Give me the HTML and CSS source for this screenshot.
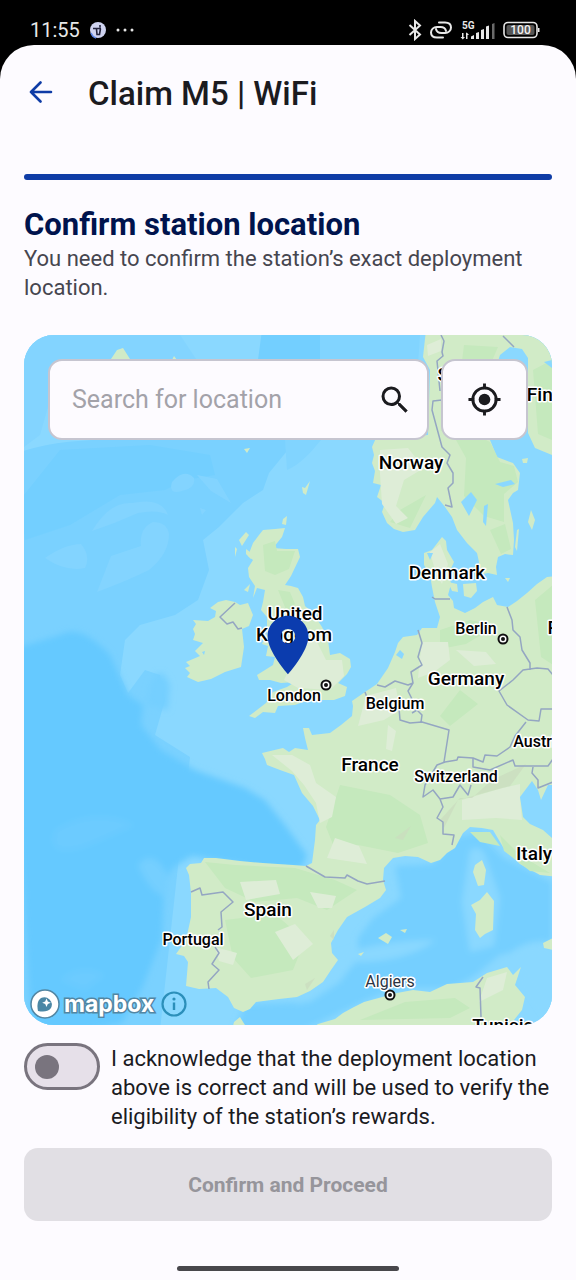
FILE: index.html
```
<!DOCTYPE html>
<html lang="en">
<head>
  <meta charset="UTF-8">
  <meta name="viewport" content="width=device-width, initial-scale=1.0">
  <title>Claim M5 | WiFi</title>
  <link rel="stylesheet" href="styles.css">
</head>
<body>
  <div class="status-bar">
    <div class="status-left">
      <span class="clock">11:55</span>
      <svg class="app-badge" viewBox="0 0 18 18" width="18" height="18">
        <circle cx="9" cy="9" r="8" fill="#cfd3f0"/>
        <path d="M4 7.500h8M11 4v2.500M7.500 8l.5 5.500h2.500l1-6" fill="none" stroke="#23233c" stroke-width="1.600"/>
        <path d="M2 12a8 8 0 0 0 5 5" fill="none" stroke="#5d86e8" stroke-width="1.500"/>
      </svg>
      <svg viewBox="0 0 18 4" width="18" height="4" fill="#e6e6e6">
        <circle cx="2" cy="2" r="1.500"/><circle cx="9" cy="2" r="1.500"/><circle cx="16" cy="2" r="1.500"/>
      </svg>
    </div>
    <div class="status-right">
      <svg viewBox="0 0 14 22" width="14" height="22" fill="none" stroke="#e8e8e8" stroke-width="2">
        <path d="M1.500 6l10.500 9.500-5 4.500V2l5 4.500L1.500 16"/>
      </svg>
      <svg viewBox="0 0 24 18" width="24" height="18" fill="none" stroke="#e8e8e8" stroke-width="2" stroke-linecap="round">
        <path d="M14 16.500H8c-4 0-6-2-6-5s2.500-5.500 6-5.500h3.500c3 0 5 1.500 5.500 4"/>
        <path d="M10 1.500h6c4 0 6 2 6 5s-2.500 5.500-6 5.500h-3.500c-3 0-5-1.500-5.500-4"/>
      </svg>
      <svg class="signal" viewBox="0 0 36 20" width="36" height="20" fill="#e8e8e8">
        <text x="2" y="9">5G</text>
        <path d="M2 13h1.500v4H5l-2.200 2.500L.5 17H2zM6 19h1.500v-4H9l-2.200-2.500L6 13z"/>
        <path d="M11 16.500l3-1.500v4h-3zM16 13l3-1v7h-3zM21 10l3-1v10h-3zM26 6.500l3-1V19h-3z"/>
        <path fill="#6a6a6a" d="M32 4l2.500-1v16H32z"/>
      </svg>
      <svg class="battery" viewBox="0 0 38 18" width="38" height="18">
        <rect x="1" y="1.500" width="33" height="15" rx="4" fill="none" stroke="#e8e8e8" stroke-width="1.600"/>
        <rect x="3.500" y="4" width="28" height="10" rx="2" fill="#555"/>
        <path d="M35 7h1.500v4H35z" fill="#e8e8e8"/>
        <text x="17.500" y="13.200">100</text>
      </svg>
    </div>
  </div>

  <main class="screen">
    <header class="app-bar">
      <button class="back-btn" type="button" aria-label="Back">
        <svg viewBox="0 0 24 24" width="24" height="24" fill="none" stroke="#0f3ca6" stroke-width="2.600" stroke-linecap="round" stroke-linejoin="round">
          <path d="M22 11H2M11.500 1.500L2 11l9.500 9.500"/>
        </svg>
      </button>
      <h1>Claim M5 | WiFi</h1>
    </header>

    <div class="progress"></div>

    <section class="intro">
      <h2>Confirm station location</h2>
      <p>You need to confirm the station’s exact deployment location.</p>
    </section>

    <section class="map">
      <svg class="map-canvas" viewBox="24 335 528 690" preserveAspectRatio="xMidYMid slice">
        <defs>
          <filter id="soft" x="-10%" y="-10%" width="120%" height="120%"><feGaussianBlur stdDeviation="3"/></filter>
        </defs>
        <!-- sea -->
        <rect x="0" y="300" width="600" height="760" fill="#8ad8ff"/>
        <path fill="#7ad1ff" d="M20 452C60 440 90 438 180 440L296 440 269 473 263 490 243 503 219 527 203 540 209 570 198 600 175 615 140 625 125 640 120 675 128 693 145 670 160 675 165 700 155 735 190 757 160 1030H20z"/>
        <path fill="#73cfff" d="M262 330h58v30h-62zM60 450l90-5 60 10 5 20-30 5-20 10-45 5-50 30-45 15-5-40z"/>
        <path fill="#81d4ff" d="M285 440h36c-10 12-20 24-34 30zM320 335h100l-2 30h-98z"/>
        <g fill="#83d4ff">
          <path d="M20 335h160l20 30H60l-20 70-20 15z"/>
          <path d="M172 482q12-14 22-4 2 10-12 13-14 4-10-9zM92 531q18-30 40-28 30-6 36 12-10-6-30-2-22 10-46 18z"/>
          <path d="M197 475l20 4 14 24-20-12zM200 508l6 2-4 5zM97 592l14-36 30-10q-2-18 12-24 14 0 16 12 0 20-20 36-20 10-52 22zM45 558q20-14 36-14 10 12 4 24-20 4-40-10z"/>
        </g>
        <g filter="url(#soft)">
          <path fill="#65c9ff" d="M10 650l50-15q20-12 50 20l18 40 15 10-2 20 20 25 34 20 50 18 20 12 20 25 22 30-5 13-30 2-80-14-20 12-8 20-2 50-20 50-20 35-90 20z"/>
          <path fill="#74cfff" d="M150 685q10-24 20 0l-2 25-22-5zM138 865q14-18 30 10l-2 22q-16-4-28-32z"/>
          <path fill="#6ccbff" d="M55 830q40-24 80-5l-50 22q-40 12-30-17zM60 980q20-18 45-5l-20 15z"/>
          <path fill="#75cfff" d="M395 866l38-2 26-28 20-3 25 25 48 24v60q-30-5-55 22l-45 24-55 0-30 12-32 15-30 14h-70l10-25 65-2 30-20 18-24 0-20 15-20 28-20z"/>
          <path fill="#8ad8ff" d="M326 960q50-20 110-20-30 22-80 22l-60 45zM560 945l-60 10-30 25 50-5 40 60zM470 850q12-6 16 8l14 40-6 48-24 6-8-50z"/>
        </g>
        <!-- land -->
        <g class="land">
          <path d="M426 330L423 357 430 370 428 435 376 438 372 447 374 455 372 463 375 471 373 483 381 485 377 497 385 503 382 512 387 523 394 529 403 532 415 530 423 517 435 503 437 497 445 507 452 517 457 530 467 543 477 553 479 562 478 575 488 573 497 575 496 567 498 557 505 554 513 555 514 540 513 523 508 500 513 493 518 490 520 473 513 463 497 457 490 440 485 400 500 355 510 347 522 349 528 358 528 433 535 448 552 455 570 460V330z"/>
          <path d="M263 530L275 529 285 528 282 537 273 548 286 549 298 549 300 557 291 576 285 585 291 586 298 588 303 597 305 606 313 613 322 627 328 640 330 655 340 653 350 659 351 667 347 674 338 683 347 687 345 696 334 700 323 700 303 702 295 705 278 706 275 713 263 712 255 718 249 716 266 703 273 692 287 687 295 682 281 683 270 680 259 680 257 675 273 665 275 657 266 656 268 646 262 644 267 633 267 617 261 610 263 602 265 590 257 588 253 598 255 586 249 577 248 568 253 560 248 556 253 543 259 535z"/>
          <path d="M235 602L240 605 248 603 253 615 249 626 242 629 244 647 241 667 225 672 211 679 198 682 187 677 190 673 185 668 190 666 186 662 200 656 195 651 203 643 193 640 195 634 193 629 196 624 193 620 208 621 215 617 216 611 210 608 218 602 226 600z"/>
          <path d="M239 540l7-8 3 3-7 11zM235 547l2 2-2 8zM246 549l8 6-3 4-5-5zM244 590l6-6-2 8zM283 519l4-3-1 9-4-1zM244 449l6-1-3 5zM302 487l3 1 5-7-4 14-3-2zM111 359l6-9 6-2 7 11zM172 360l2-4 3 4z"/>
          <path d="M442 537L446 541 447 550 454 562 449 573 451 584 448 595 453 601 454 608 465 613 475 608 483 602 493 597 497 605 508 607 517 601 527 593 537 584 547 577 560 576V785H548L541 800 538 790 532 781 520 797 523 817 530 824 543 830 560 845V877L540 875 520 864 503 847 493 830 482 828 470 827 463 833 455 848 447 853 440 860 431 863 418 857 405 856 393 858 384 868 383 880 386 890 380 898 365 907 347 917 338 930 331 943 332 953 338 960 331 970 323 982 310 991 297 997 279 999 256 1002 250 1009 243 1012 234 1008 228 997 216 988 199 989 186 986 188 962 184 956 176 954 186 940 191 917 191 893 189 875 186 868 190 864 201 863 204 858 216 858 240 861 263 863 293 865 306 866 312 863 315 840 316 825 320 820 313 806 302 793 294 775 280 770 267 765 265 759 262 753 283 748 289 752 295 748 308 750 305 738 303 728 309 728 312 735 330 733 341 725 352 716 353 706 352 701 365 692 377 684 388 668 395 652 398 643 403 637 417 635 422 628 437 628 440 617 435 602 432 587 430 575 424 565 424 553 432 550z"/>
          <path d="M448 582l9 2 1 8-6-1zM463 584l13-1 1 8-6 7-7-2zM517 530l2-1-2 22-2-4zM531 510l4 10-3 10-4-8zM505 578l5 0-2 4zM522 459l6-1-1 5-4 0z"/>
          <path d="M482 860l4 10-2 15-6 1-5-14 2-7zM487 892l7 9-1 29-8 4-5 4-5-8 1-16-5-9 9-5zM378 938l8-5 6 4-4 7zM400 930l7-1-2 4zM358 954l6-2-3 4zM543 943l10-5v12l-9-2z"/>
          <path d="M310 1030L318 1024 335 1019 343 1013 354 1007 364 1002 397 993 413 990 430 992 447 984 473 982 487 973 507 967 513 975 521 967 515 985 525 997 522 1010 514 1020 513 1030zM232 1030L234 1022 240 1017 248 1030z"/>
        </g>
        <!-- relief -->
        <g fill="#c5e9bd">
          <path d="M440 430l30 2 20 10 10 20 14 4 4 16-14 12 0 28-20-6-20-20 2-38-10-18zM464 345l34 2-6 14h-30zM533 370l19-10v80l-14-6zM490 530l15-6 6 25-10 5zM400 510l26-15-16 33-20-6z"/>
          <path d="M263 545l12-4 2 10 18 0-6 18-14 6-10-4zM278 590l12 2 5 12-8 8zM205 862l30 3 60 3 40 12 22 10-30 20-30-12-42 4-30-14z"/>
          <path d="M340 785l50 10 30 20 8 28-30 10-40-8-20 12-12-30zM470 832l20 0 10 14-20-4zM500 835l20 20 30 18-20-2-26-20zM440 630l30-10 26 6-30 18-26 5zM460 690l18 14-28 22-10-10zM535 600l18-15v80l-12-8z"/>
          <path d="M225 920l50-6 30 26-12 30-42 8-18-20zM360 1020l45-18 50-4 15 10-20 10z"/>
        </g>
        <g fill="#deedd7">
          <path d="M380 450l28-2 16 20-20 12-8 26 12 12-12 6-14-20-2-30zM427 345l14-6v12l-13 5zM290 632l26 8 10 20 16 0 2 16-14 14-32-2-14-8 10-20z"/>
          <path d="M422 642l26 0 2 18-16 12-16 6 2-20zM366 696l30-8 4 22-16 10-26 6zM430 552l10-8 8 20-6 20-6-10zM456 650l30 2 10 12-22 2z"/>
          <path d="M272 755l20 0 18 10 6 18 20 14-4 20-12 6-4-20-12-18-12-14zM335 838l24 8 8 18-40-6zM388 725l8 6-4 20-6-2zM462 800l40-12 18-4 0 16 2 20-26-2-34 2zM240 882l36-2 4 14-34 6zM275 932l20-8 18 20-20 16zM310 892l26 4-4 12-14 0zM487 978l20-6-4 18-24 12zM215 947l22 6-4 12-14-4z"/>
        </g>
        <g fill="#cbdcbf" opacity=".7">
          <path d="M440 820l20-22 12 0 20-18 34-16-16 22-52 14-14 28zM305 984l10-6-8 12zM395 838l16-12-8 14zM330 936l4-6 0 10z"/>
        </g>
        <g fill="#8ad8ff">
          <path d="M461 502l10-10 6 8-8 16zM484 506l4-2-2 22-3-4zM495 484l16-4 4 4-12 3zM427 553l6 0-3 7zM400 650l4 4-2 5-6-4zM202 652l3-1-1 4zM544 362l8-2v8z"/>
        </g>
        <!-- borders -->
        <g fill="none" stroke="#94a6c2" stroke-width="1.500" stroke-linejoin="round">
          <path d="M441 335l3 6-2 11 1 4-6 5 3 30M442 400l-9 1-1 9 10 37 8 8-3 8 6 10v10l-5 5 4 19-7-2M503 336l11 11"/>
          <path d="M235 603l-15 14 7 7 6-2 5 7 4-1"/>
          <path d="M432 597l3 2h15M418 630l4 13-4 14 4 8-11 7 2 11-5 8 4 8 4 12M365 692l3 8M377 685l8 2 10-6 13 4 5-2M399 708l1 12 10 3 12-1 27 8-5 32M412 713l5-3 5 5-1 7M507 607l5 13 1 10 7 7 2 13 8 13v7M553 675l-5-6-11-1-14 2-10 10-14 11 8 14 21 15 11 1 2-12h12M526 722l-11 14-5 11-13 9-12-1-2 7-10-4-15-1-1 3-12 2"/>
          <path d="M445 762l-8 3-12 20-2 12 10-7 7 9 13-2 7-12 8 10 3-10M473 758v9l17 3 23-10 2 6 33 0 5-7M533 767l-1 6 6 7v8l15-6M440 799l3 8-6 11 6 4v12l11 1-2 10"/>
          <path d="M306 866l19 11 20 1 2-3 11 6 9 3 18-3M191 892l9-4 2 7 21-3 10 10-12 10 1 15-4 3M215 947l4 6-7 11 7 6-11 12 1 7M483 977l-7 10 4 1 1 29"/>
        </g>
        <g class="city">
          <circle cx="326" cy="685" r="4.500"/><circle cx="503" cy="639" r="4.500"/><circle cx="390" cy="995" r="4.500"/>
        </g>
        <g fill="#111">
          <circle cx="326" cy="685" r="2"/><circle cx="503" cy="639" r="2"/><circle cx="390" cy="995" r="2"/>
        </g>
        <g class="country">
          <text x="411" y="469">Norway</text>
          <text x="447" y="579">Denmark</text>
          <text x="295" y="620">United</text>
          <text x="294" y="641">Kingdom</text>
          <text x="466" y="685">Germany</text>
          <text x="370" y="771">France</text>
          <text x="268" y="916">Spain</text>
          <text x="534" y="860">Italy</text>
          <text x="503" y="1032">Tunisia</text>
          <text x="471" y="381">Sweden</text>
          <text x="558" y="401">Finland</text>
          <text x="577" y="634">Poland</text>
        </g>
        <g class="country small">
          <text x="395" y="709">Belgium</text>
          <text x="456" y="782">Switzerland</text>
          <text x="539" y="747">Austria</text>
          <text x="193" y="945">Portugal</text>
          <text x="294" y="701">London</text>
          <text x="476" y="634">Berlin</text>
        </g>
        <g class="country small light">
          <text x="390" y="987">Algiers</text>
        </g>
      </svg>

      <svg class="pin" viewBox="0 0 24 24">
        <path fill="#0b3cae" d="M12 2C8.130 2 5 5.130 5 9c0 5.250 7 13 7 13s7-7.750 7-13c0-3.870-3.130-7-7-7zm0 9.500a2.500 2.500 0 0 1 0-5 2.500 2.500 0 0 1 0 5z"/>
      </svg>

      <div class="map-controls">
        <form class="search-box">
          <input type="text" placeholder="Search for location" aria-label="Search for location">
          <button type="button" aria-label="Search">
            <svg viewBox="0 0 24 24" width="36" height="36" fill="#1b1b1f">
              <path d="M15.500 14h-.79l-.28-.27A6.470 6.470 0 0 0 16 9.500 6.500 6.500 0 1 0 9.500 16c1.610 0 3.090-.59 4.230-1.570l.27.28v.79l5 4.990L20.490 19l-4.990-5zm-6 0a4.500 4.500 0 1 1 0-9 4.500 4.500 0 0 1 0 9z"/>
            </svg>
          </button>
        </form>
        <button class="locate-btn" type="button" aria-label="My location">
          <svg viewBox="0 0 24 24" width="35" height="35">
            <circle cx="12" cy="12" r="4" fill="#1b1b1f"/>
            <path d="M12 1v4M12 19v4M1 12h4M19 12h4" stroke="#1b1b1f" stroke-width="2"/>
            <circle cx="12" cy="12" r="8" fill="none" stroke="#1b1b1f" stroke-width="2"/>
          </svg>
        </button>
      </div>

      <div class="attribution">
        <a class="logo" href="#mapbox">
          <svg viewBox="0 0 30 30" width="30" height="30">
            <circle cx="15" cy="15" r="14" fill="#fff" stroke="#5286a3" stroke-width="1.500"/>
            <path fill="#4b87a5" d="M8 22c-1-5-1-10 3-13a7.500 7.500 0 0 1 10 10c-3 4-8 4-13 3z"/>
            <path fill="#fff" d="M16.500 9.500l1.300 3 3 1.300-3 1.300-1.300 3-1.300-3-3-1.300 3-1.300z"/>
          </svg>
          <span>mapbox</span>
        </a>
        <button class="info-btn" type="button" aria-label="Map attribution">
          <svg viewBox="0 0 26 26" width="26" height="26">
            <circle cx="13" cy="13" r="11.500" fill="none" stroke="#2b8fba" stroke-width="2.200"/>
            <path d="M13 11.500v7.500" stroke="#2b8fba" stroke-width="2.400"/>
            <circle cx="13" cy="8" r="1.600" fill="#2b8fba"/>
          </svg>
        </button>
      </div>
    </section>

    <div class="acknowledge">
      <input type="checkbox" role="switch" id="ack" class="switch">
      <label for="ack">I acknowledge that the deployment location above is correct and will be used to verify the eligibility of the station’s rewards.</label>
    </div>

    <button class="proceed-btn" type="button" disabled>Confirm and Proceed</button>
    <div class="home-indicator"></div>
  </main>
</body>
</html>
```
FILE: styles.css
```
* {
  margin: 0;
  padding: 0;
  box-sizing: border-box;
}

body {
  font-family: Roboto, "Noto Sans", sans-serif;
  background-color: #000;
  color: #1b1b1f;
  display: flex;
  flex-direction: column;
  min-height: 100vh;
}

button {
  font-family: inherit;
  border: none;
  background: none;
  cursor: pointer;
}

svg {
  display: block;
}

/* Status bar */
.status-bar {
  display: flex;
  justify-content: space-between;
  height: 45px;
  padding: 14px 35px 0 30px;
}

.status-left,
.status-right {
  display: flex;
  align-items: center;
  height: 31px;
}

.status-left {
  gap: 9px;
}

.status-right {
  gap: 7px;
}

.clock {
  color: #e8e8e8;
  font-size: 20px;
}

.signal text {
  font-size: 10px;
  font-weight: 700;
}

.battery text {
  fill: #f2f2f2;
  font-size: 12px;
  font-weight: 500;
  text-anchor: middle;
}

/* Screen */
.screen {
  flex: 1;
  display: flex;
  flex-direction: column;
  background-color: #fdfbff;
  border-radius: 34px 34px 0 0;
  padding: 0 24px 9px;
}

.app-bar {
  display: flex;
  align-items: center;
  gap: 35px;
  height: 96px;
  padding-left: 5px;
}

.app-bar h1 {
  font-size: 33px;
  font-weight: 500;
}

.progress {
  height: 6px;
  margin-top: 33px;
  border-radius: 3px;
  background-color: #0f3ca6;
}

.intro {
  margin: 27px 0 33px;
}

.intro h2 {
  font-size: 31px;
  line-height: 36px;
  font-weight: 700;
  color: #00134d;
}

.intro p {
  margin-top: 1px;
  font-size: 22px;
  line-height: 29px;
  color: #46464f;
}

/* Map */
.map {
  flex: 1;
  position: relative;
  min-height: 400px;
  border-radius: 30px;
  overflow: hidden;
  background-color: #8ad8ff;
}

.map-canvas {
  position: absolute;
  width: 100%;
  height: 100%;
}

.land {
  fill: #d1ebc7;
}

.city circle {
  fill: #fff;
  stroke: #111;
  stroke-width: 2px;
}

.country {
  font-size: 19px;
  font-weight: 500;
  text-anchor: middle;
  fill: #000;
  stroke: #fff;
  stroke-width: 3px;
  stroke-linejoin: round;
  paint-order: stroke;
}

.country.small {
  font-size: 16px;
}

.country.light {
  font-weight: 400;
  fill: #2b3442;
}

.pin {
  position: absolute;
  left: 50%;
  bottom: 50%;
  width: 70px;
  height: 70px;
  transform: translateX(-50%);
}

.map-controls {
  position: relative;
  display: flex;
  gap: 12px;
  padding: 24px;
}

.search-box,
.locate-btn {
  height: 81px;
  border: 2px solid #c6c5d0;
  border-radius: 14px;
  background-color: #fdfbff;
}

.search-box {
  flex: 1;
  min-width: 0;
  display: flex;
  align-items: center;
  padding: 0 14px 0 22px;
}

.search-box input {
  flex: 1;
  min-width: 0;
  border: none;
  outline: none;
  background: none;
  font-family: inherit;
  font-size: 25px;
  color: #1b1b1f;
}

.search-box input::placeholder {
  color: #a3a2a9;
}

.locate-btn {
  flex: none;
  width: 87px;
  display: flex;
  align-items: center;
  justify-content: center;
}

.attribution {
  position: absolute;
  left: 6px;
  bottom: 6px;
  display: flex;
  align-items: center;
  gap: 7px;
}

.logo {
  display: flex;
  align-items: center;
  gap: 4px;
  font-family: Inter, sans-serif;
  font-size: 23px;
  line-height: 30px;
  font-weight: 700;
  color: #fff;
  text-decoration: none;
}

.logo span {
  -webkit-text-stroke: 3px #5286a3;
  paint-order: stroke;
}

/* Acknowledgement */
.acknowledge {
  display: flex;
  align-items: flex-start;
  gap: 11px;
  margin-top: 18px;
}

.acknowledge label {
  flex: 1;
  font-size: 22px;
  line-height: 29px;
  padding-top: 1px;
}

.switch {
  appearance: none;
  flex: none;
  display: flex;
  align-items: center;
  width: 76px;
  height: 47px;
  padding-left: 8px;
  border: 3px solid #79747e;
  border-radius: 24px;
  background-color: #e6e0e9;
}

.switch::before {
  content: "";
  width: 24px;
  height: 24px;
  border-radius: 50%;
  background-color: #79747e;
}

.switch:checked {
  justify-content: flex-end;
  padding: 0 8px 0 0;
}

.proceed-btn {
  height: 73px;
  margin-top: 17px;
  border-radius: 14px;
  background-color: #e1dfe4;
  color: #96959b;
  font-size: 21px;
  font-weight: 700;
  cursor: default;
}

.home-indicator {
  align-self: center;
  width: 42%;
  height: 5px;
  margin-top: 45px;
  border-radius: 3px;
  background-color: #48474c;
}
```
